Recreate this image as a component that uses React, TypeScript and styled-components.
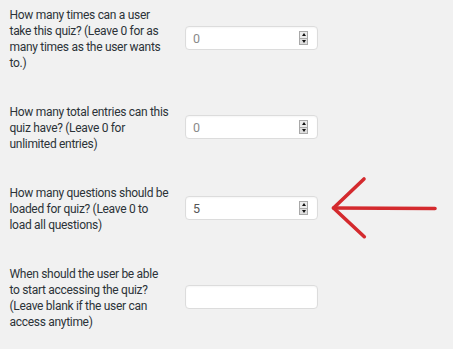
import * as React from 'react';
import styled, { createGlobalStyle } from 'styled-components';

interface IField {
    label: string[];
    value?: string;
    spinner: boolean;
    dim?: boolean;
    marked?: boolean;
}

const fields: IField[] = [
    {
        label: ['How many times can a user', 'take this quiz? (Leave 0 for as', 'many times as the user wants', 'to.)'],
        value: '0',
        spinner: true,
        dim: true,
    },
    {
        label: ['How many total entries can this', 'quiz have? (Leave 0 for', 'unlimited entries)'],
        value: '0',
        spinner: true,
        dim: true,
    },
    {
        label: ['How many questions should be', 'loaded for quiz? (Leave 0 to', 'load all questions)'],
        value: '5',
        spinner: true,
        marked: true,
    },
    {
        label: ['When should the user be able', 'to start accessing the quiz?', '(Leave blank if the user can', 'access anytime)'],
        value: '',
        spinner: false,
    },
];

const GlobalStyle = createGlobalStyle`
    html, body {
        margin: 0;
        background: #f1f1f1;
    }
    body {
        font-family: Roboto, "Open Sans", sans-serif;
        font-size: 12px;
        letter-spacing: -0.3px;
        color: #2c3338;
    }
`;

const Form = styled.div`
    display: flex;
    flex-direction: column;
    gap: 33px;
    padding: 7px 0 0 9.5px;
`;

const Row = styled.div`
    position: relative;
    display: flex;
    align-items: center;
`;

const Label = styled.div`
    width: 175.5px;
    flex-shrink: 0;
    line-height: 16px;
    white-space: nowrap;
`;

const Field = styled.div`
    display: flex;
    align-items: center;
    box-sizing: border-box;
    width: 133px;
    height: 23.5px;
    margin-top: -2px;
    padding: 0 9px 0 7px;
    background: #fff;
    border: 1px solid #dcdcdc;
    border-radius: 4px;
    box-shadow: inset 0 1px 2px rgba(0, 0, 0, 0.04);
`;

const Input = styled.input<{ $dim?: boolean }>`
    flex: 1;
    min-width: 0;
    border: 0;
    padding: 0;
    outline: none;
    background: transparent;
    font-family: Roboto, "Open Sans", sans-serif;
    font-size: 12.5px;
    color: ${p => (p.$dim ? '#8a8a8a' : '#555')};
`;

const Spinner = styled.div`
    display: flex;
    flex-direction: column;
    width: 9px;
    height: 14px;
`;

const SpinButton = styled.div<{ $down?: boolean }>`
    flex: 1;
    display: flex;
    align-items: center;
    justify-content: center;
    box-sizing: border-box;
    border: 1px solid #a9a9a9;
    border-top-width: ${p => (p.$down ? '0' : '1px')};
    background: ${p => (p.$down ? '#dedede' : '#ececec')};

    &::after {
        content: '';
        width: 0;
        height: 0;
        border-left: 2.5px solid transparent;
        border-right: 2.5px solid transparent;
        ${p => (p.$down ? 'border-top: 3px solid #111;' : 'border-bottom: 3px solid #111;')}
    }
`;

const Arrow = styled.svg`
    position: absolute;
    left: 320.5px;
    top: -10.5px;
    width: 110px;
    height: 70px;
    overflow: visible;
`;

const RedArrow: React.FC = () => (
    <Arrow viewBox="0 0 110 70">
        <g stroke="#d42a2e" strokeWidth="3.6" strokeLinecap="round" fill="none">
            <path d="M3.5 33 L105 33.5" />
            <path d="M34 4 L3.5 33 L34.3 61.7" strokeLinejoin="round" />
        </g>
    </Arrow>
);

const App: React.FC = () => (
    <>
        <GlobalStyle />
        <Form>
            {fields.map((f, idx) => (
                <Row key={idx}>
                    <Label>
                        {f.label.map((line, i) => (
                            <React.Fragment key={i}>
                                {line}
                                {i < f.label.length - 1 && <br />}
                            </React.Fragment>
                        ))}
                    </Label>
                    <Field>
                        <Input type="text" defaultValue={f.value} $dim={f.dim} />
                        {f.spinner && (
                            <Spinner>
                                <SpinButton />
                                <SpinButton $down />
                            </Spinner>
                        )}
                    </Field>
                    {f.marked && <RedArrow />}
                </Row>
            ))}
        </Form>
    </>
);

export default App;
